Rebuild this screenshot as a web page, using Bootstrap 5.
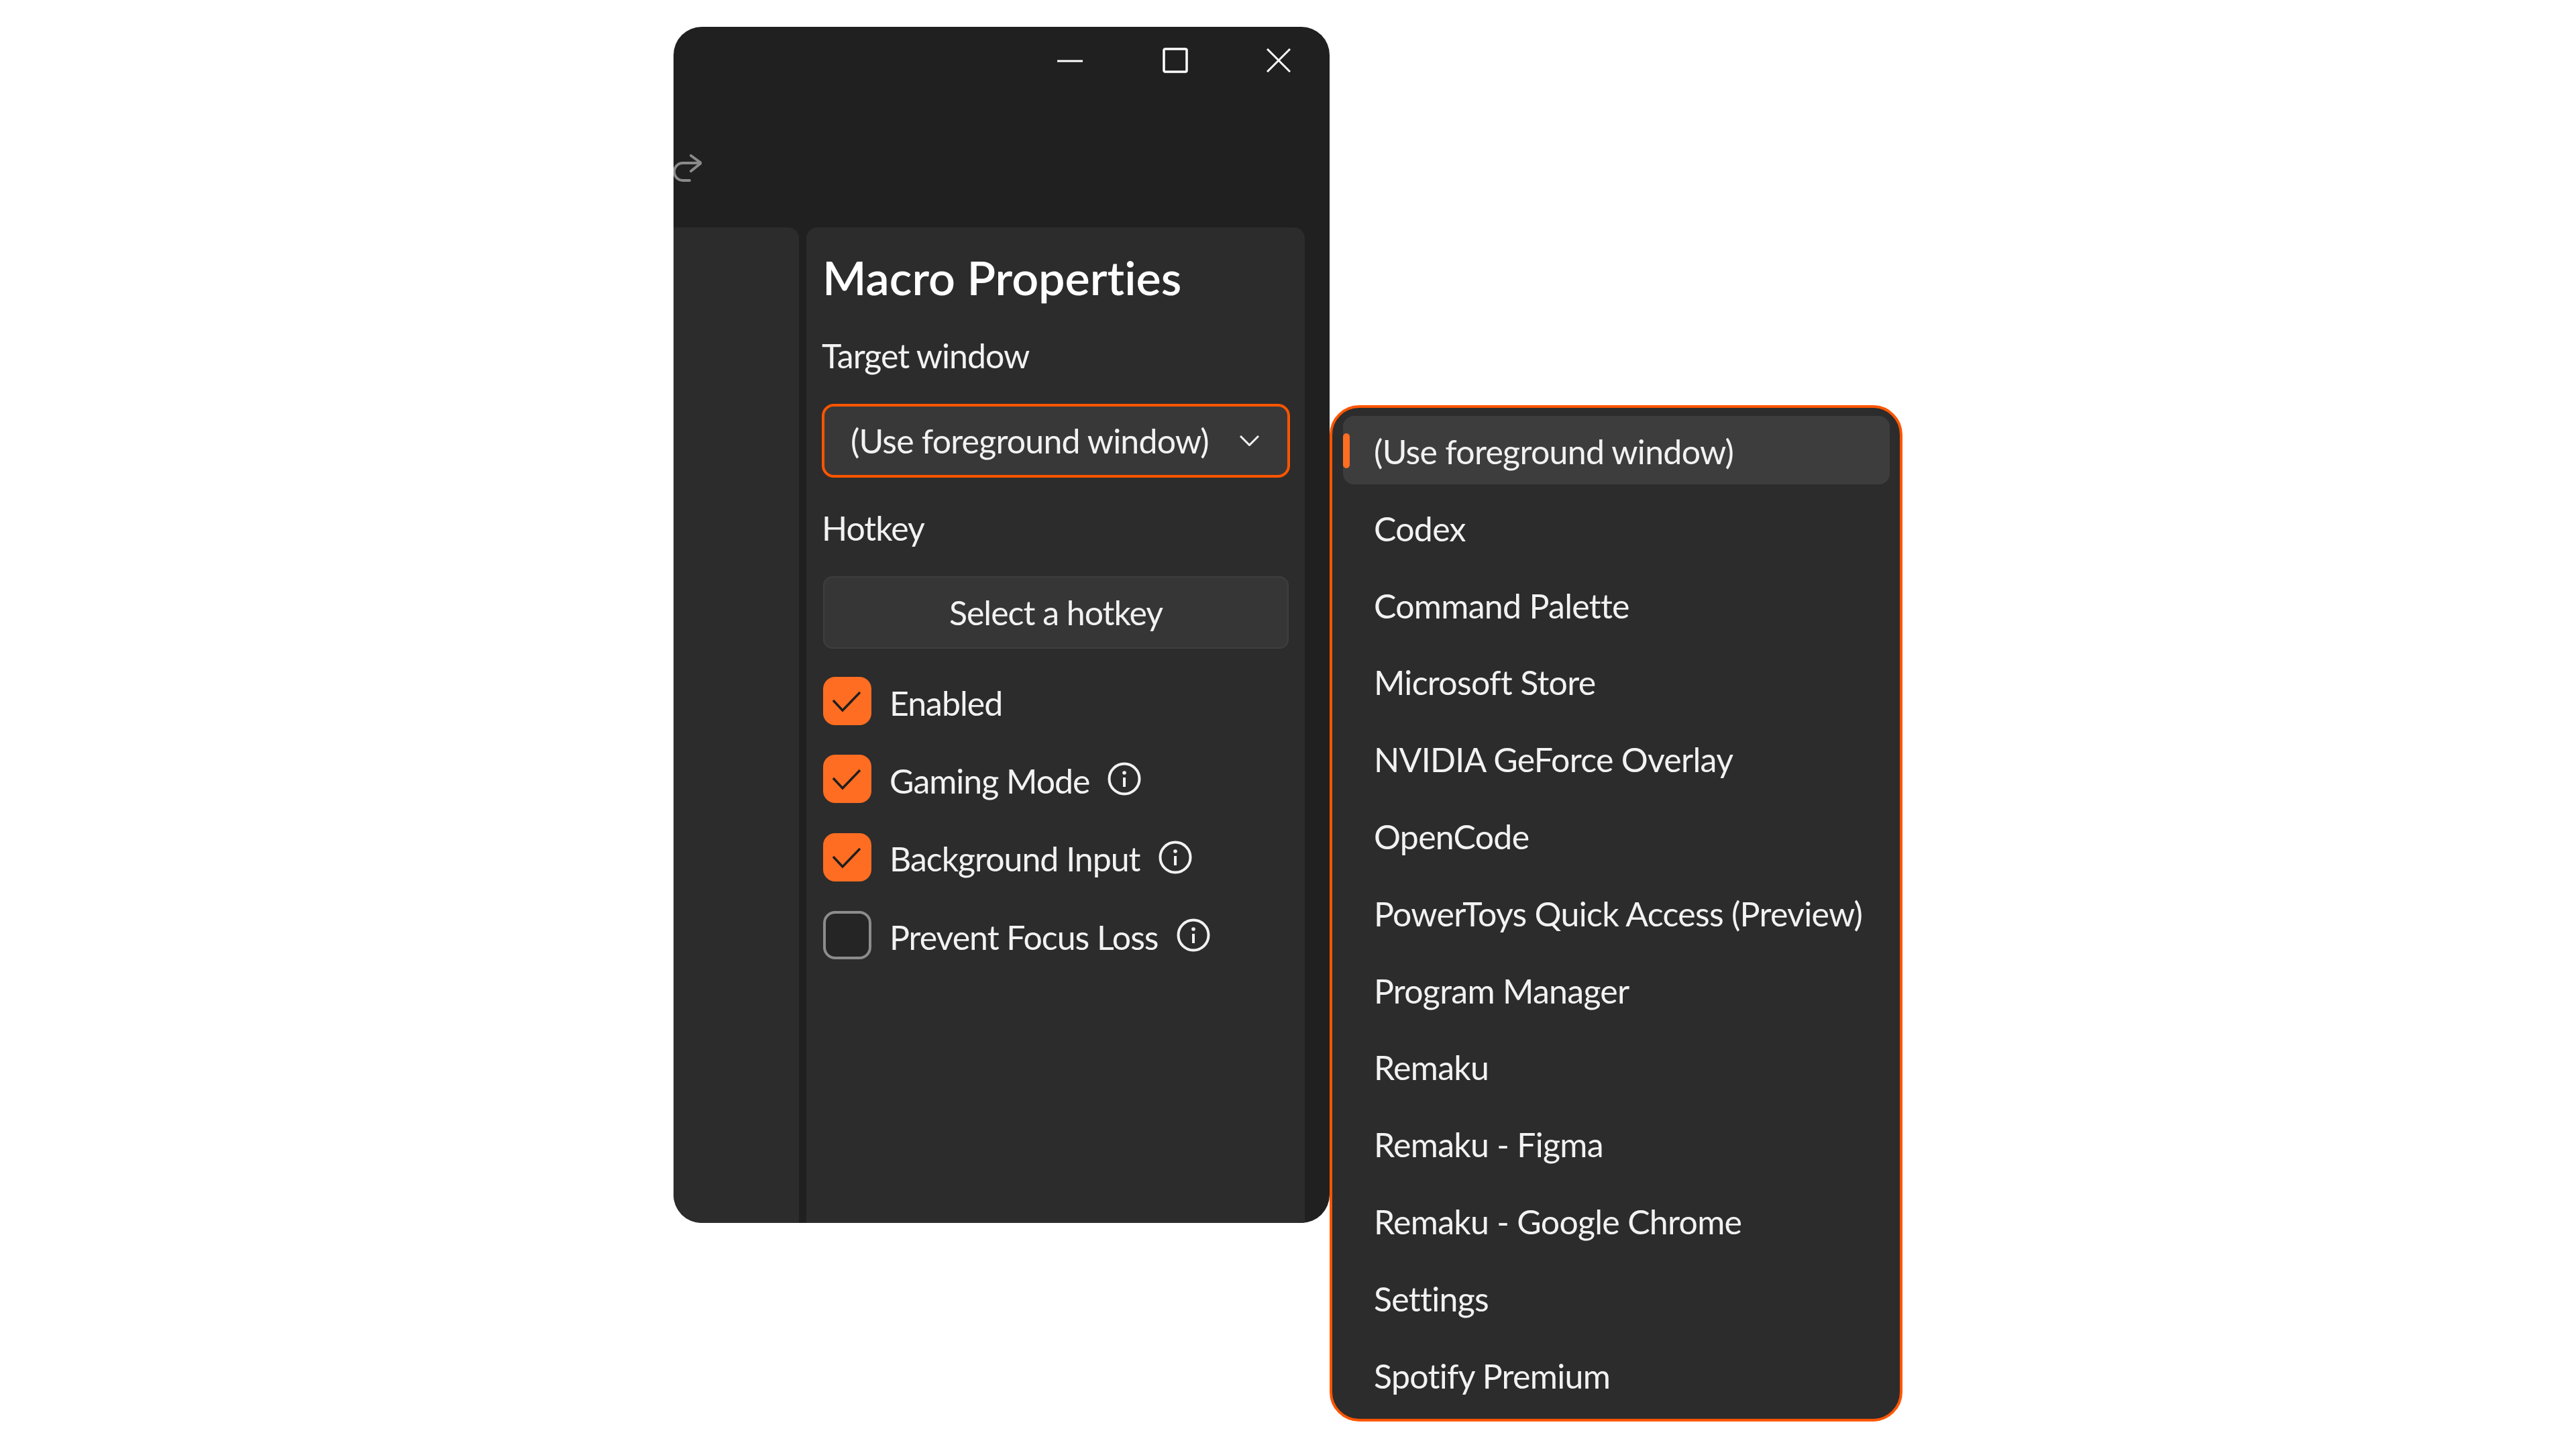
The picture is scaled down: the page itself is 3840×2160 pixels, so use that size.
<!DOCTYPE html>
<html lang="en">
<head>
    <meta charset="UTF-8" />
    <meta name="viewport" content="width=device-width, initial-scale=1.0" />
    <title>Macro Properties</title>
    <link href="https://cdn.jsdelivr.net/npm/bootstrap@5.3.0/dist/css/bootstrap.min.css" rel="stylesheet" />
    <style>
        body {
            background-color: #ffffff;
            color: #f2f2f2;
            font-family: "Lato", "Liberation Sans", sans-serif;
            font-size: 50px;
            letter-spacing: -1px;
            font-variant-ligatures: none;
            height: 2160px;
            overflow: hidden;
        }

        .stage {
            padding: 40px 0 0 1004px;
        }

        .app-window {
            width: 978px;
            height: 1783px;
            background-color: #202020;
            border-radius: 42px;
            overflow: hidden;
            flex-shrink: 0;
        }

        .title-bar {
            padding: 31px 58px 0 0;
            height: 69px;
            gap: 117px;
        }

        .title-bar svg {
            display: block;
        }

        .min-icon {
            margin-right: 2px;
        }

        .tool-bar {
            height: 230px;
            padding-top: 121px;
        }

        .side-panel {
            width: 187px;
            background-color: #2c2c2c;
            border-top-right-radius: 16px;
        }

        .main-panel {
            width: 743px;
            margin-left: 11px;
            padding: 40px 22px 0 23px;
            background-color: #2c2c2c;
            border-top-left-radius: 16px;
            border-top-right-radius: 16px;
        }

        .panel-title {
            height: 68px;
            line-height: 68px;
            padding-left: 1px;
            font-size: 70px;
            font-weight: 600;
            letter-spacing: 0;
            margin: 0;
            color: #ffffff;
        }

        .field-label {
            height: 46px;
            line-height: 46px;
            margin: 0;
        }

        .label-target { margin-top: 60px; }
        .label-hotkey { margin-top: 52px; }

        .window-select {
            height: 110px;
            margin-top: 49px;
            padding: 0 42px 0 39px;
            font-size: 50px;
            letter-spacing: -0.8px;
            color: #f2f2f2;
            background-color: #383838;
            border: 4px solid #ff5500;
            border-radius: 18px;
        }

        .hotkey-btn {
            height: 108px;
            margin: 49px 2px 0;
            font-size: 50px;
            letter-spacing: -1px;
            color: #f2f2f2;
            background-color: #363636;
            border: 2px solid #3e3e3e;
            border-radius: 14px;
        }

        .checks {
            margin-top: 42px;
            gap: 44.4px;
        }

        .check-row {
            height: 72px;
            margin: 0 0 0 2px;
            padding: 0;
            min-height: 0;
        }

        .check-row .form-check-input {
            width: 72px;
            height: 72px;
            margin: 0;
            float: none;
            flex-shrink: 0;
            background-color: #252525;
            border: 4px solid #8c8c8c;
            border-radius: 18px;
        }

        .check-row .form-check-input:checked {
            background-color: #ff6d22;
            border: 0;
            background-image: url("data:image/svg+xml,%3csvg xmlns='http://www.w3.org/2000/svg' viewBox='0 0 72 72'%3e%3cpath fill='none' stroke='%231f1f1f' stroke-width='3.5' d='M15 35l14 15 26-27'/%3e%3c/svg%3e");
        }

        .check-row .form-check-label {
            margin-left: 27px;
            line-height: 72px;
            padding-top: 5px;
        }

        .info-icon {
            width: 50px;
            height: 50px;
            margin-left: 27px;
        }

        .window-menu {
            width: 854px;
            height: 1515px;
            margin: 564px 0 0 0;
            padding: 12px 15px 0 16px;
            background-color: #2c2c2c;
            border: 4px solid #ff5500;
            border-radius: 44px;
            flex-shrink: 0;
            gap: 12.8px;
            letter-spacing: -0.7px;
        }

        .window-menu .list-group-item {
            height: 102px;
            line-height: 106px;
            padding: 0 0 0 46px;
            color: #f2f2f2;
            background-color: transparent;
            border: 0;
            border-radius: 16px;
        }

        .window-menu .list-group-item.active {
            background-color: #3d3d3d;
        }

        .window-menu .list-group-item.active::before {
            content: "";
            position: absolute;
            left: 0;
            top: 26px;
            width: 10px;
            height: 52px;
            border-radius: 5px;
            background-color: #ff6d22;
        }
    </style>
</head>

<body class="m-0">
    <div class="stage d-flex align-items-start">

        <!-- App window -->
        <div class="app-window d-flex flex-column">
            <div class="title-bar d-flex justify-content-end">
                <svg class="min-icon" width="38" height="38" viewBox="0 0 38 38"><path d="M0 20h38" stroke="#fff" stroke-width="3" /></svg>
                <svg width="38" height="38" viewBox="0 0 38 38"><rect x="2" y="2" width="34" height="34" rx="2" fill="none" stroke="#fff" stroke-width="3.500" /></svg>
                <svg width="36" height="38" viewBox="0 0 36 38"><path d="M1 2l34 34M35 2L1 36" stroke="#fff" stroke-width="3" /></svg>
            </div>
            <div class="tool-bar">
                <svg class="d-block" width="42" height="42" viewBox="0 0 42 42"><path d="M26 2l15 11-15 12M41 13H14a13 13 0 0 0 0 26h10" fill="none" stroke="#8a8a8a" stroke-width="4" stroke-linecap="round" stroke-linejoin="round" /></svg>
            </div>
            <div class="d-flex flex-grow-1">
                <div class="side-panel"></div>
                <div class="main-panel d-flex flex-column">
                    <h1 class="panel-title">Macro Properties</h1>
                    <p class="field-label label-target">Target window</p>
                    <button type="button" class="btn window-select d-flex align-items-center justify-content-between">
                        <span>(Use foreground window)</span>
                        <svg width="29" height="16" viewBox="0 0 29 16"><path d="M1 1l13.500 13.500L28 1" fill="none" stroke="#f2f2f2" stroke-width="3" /></svg>
                    </button>
                    <p class="field-label label-hotkey">Hotkey</p>
                    <button type="button" class="btn hotkey-btn">Select a hotkey</button>
                    <div class="checks d-flex flex-column">
                        <div class="form-check check-row d-flex align-items-center">
                            <input class="form-check-input" type="checkbox" id="chkEnabled" checked>
                            <label class="form-check-label" for="chkEnabled">Enabled</label>
                        </div>
                        <div class="form-check check-row d-flex align-items-center">
                            <input class="form-check-input" type="checkbox" id="chkGaming" checked>
                            <label class="form-check-label" for="chkGaming">Gaming Mode</label>
                            <svg class="info-icon" viewBox="0 0 50 50"><circle cx="25" cy="25" r="22.500" fill="none" stroke="#f2f2f2" stroke-width="4" /><path d="M25 23v14" stroke="#f2f2f2" stroke-width="4" /><circle cx="25" cy="16" r="2.800" fill="#f2f2f2" /></svg>
                        </div>
                        <div class="form-check check-row d-flex align-items-center">
                            <input class="form-check-input" type="checkbox" id="chkBackground" checked>
                            <label class="form-check-label" for="chkBackground">Background Input</label>
                            <svg class="info-icon" viewBox="0 0 50 50"><circle cx="25" cy="25" r="22.500" fill="none" stroke="#f2f2f2" stroke-width="4" /><path d="M25 23v14" stroke="#f2f2f2" stroke-width="4" /><circle cx="25" cy="16" r="2.800" fill="#f2f2f2" /></svg>
                        </div>
                        <div class="form-check check-row d-flex align-items-center">
                            <input class="form-check-input" type="checkbox" id="chkFocus">
                            <label class="form-check-label" for="chkFocus">Prevent Focus Loss</label>
                            <svg class="info-icon" viewBox="0 0 50 50"><circle cx="25" cy="25" r="22.500" fill="none" stroke="#f2f2f2" stroke-width="4" /><path d="M25 23v14" stroke="#f2f2f2" stroke-width="4" /><circle cx="25" cy="16" r="2.800" fill="#f2f2f2" /></svg>
                        </div>
                    </div>
                </div>
            </div>
        </div>

        <!-- Target window dropdown list -->
        <ul class="window-menu list-group">
            <li class="list-group-item active">(Use foreground window)</li>
            <li class="list-group-item">Codex</li>
            <li class="list-group-item">Command Palette</li>
            <li class="list-group-item">Microsoft Store</li>
            <li class="list-group-item">NVIDIA GeForce Overlay</li>
            <li class="list-group-item">OpenCode</li>
            <li class="list-group-item">PowerToys Quick Access (Preview)</li>
            <li class="list-group-item">Program Manager</li>
            <li class="list-group-item">Remaku</li>
            <li class="list-group-item">Remaku - Figma</li>
            <li class="list-group-item">Remaku - Google Chrome</li>
            <li class="list-group-item">Settings</li>
            <li class="list-group-item">Spotify Premium</li>
        </ul>
    </div>

    <script src="https://cdn.jsdelivr.net/npm/bootstrap@5.3.0/dist/js/bootstrap.bundle.min.js"></script>
</body>

</html>
